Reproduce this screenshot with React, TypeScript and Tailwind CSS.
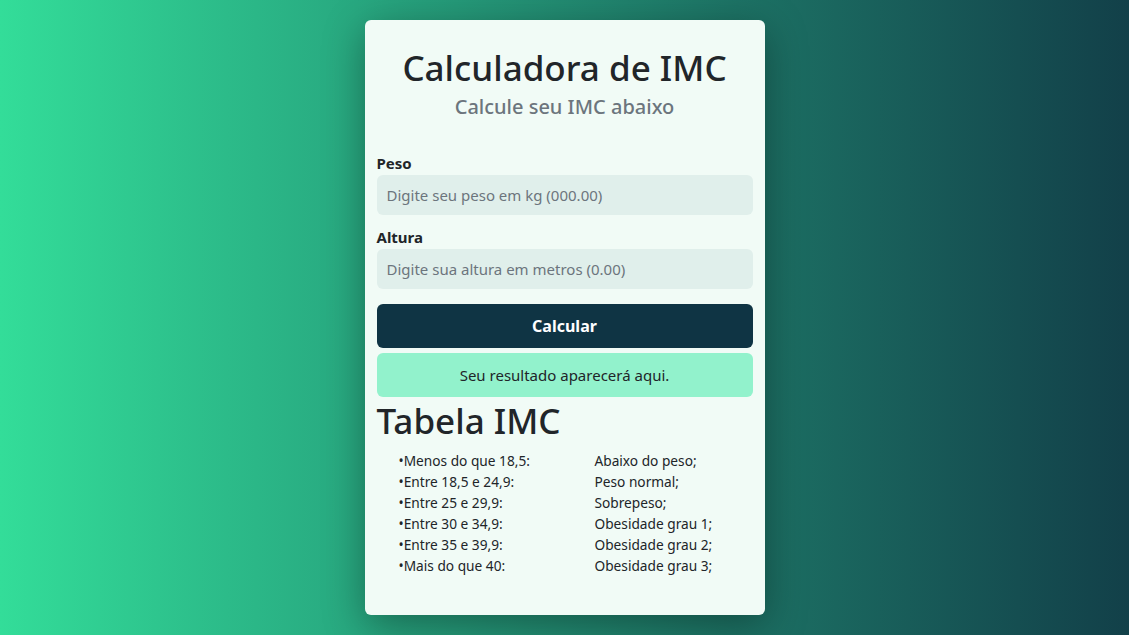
const rows = [
  ['Menos do que 18,5:', 'Abaixo do peso;'],
  ['Entre 18,5 e 24,9:', 'Peso normal;'],
  ['Entre 25 e 29,9:', 'Sobrepeso;'],
  ['Entre 30 e 34,9:', 'Obesidade grau 1;'],
  ['Entre 35 e 39,9:', 'Obesidade grau 2;'],
  ['Mais do que 40:', 'Obesidade grau 3;'],
];

export default function App() {
  return (
    <div className="min-h-[635px] bg-gradient-to-r from-[#33dd99] to-[#124049] pt-5 pb-5 font-['Noto_Sans',sans-serif] text-[#212529]">
      <div className="mx-auto w-[400px] h-[595px] rounded-md bg-[#f1fbf6] px-3 pt-6 shadow-[0_10px_40px_rgba(0,0,0,0.35)]">
        <h1 className="text-center text-[35px] leading-[48px] font-medium">Calculadora de IMC</h1>
        <p className="text-center text-[20px] leading-[30px] font-medium text-[#6c757d]">Calcule seu IMC abaixo</p>

        <form className="mt-[29px]" onSubmit={(e) => e.preventDefault()}>
          <label className="block text-[15px] leading-6 font-bold">Peso</label>
          <input
            className="block w-full h-10 rounded-md bg-[#e0efeb] px-[10px] text-[15px] outline-none placeholder:text-[#6c757d]"
            placeholder="Digite seu peso em kg (000.00)"
          />
          <label className="block mt-[10px] text-[15px] leading-6 font-bold">Altura</label>
          <input
            className="block w-full h-10 rounded-md bg-[#e0efeb] px-[10px] text-[15px] outline-none placeholder:text-[#6c757d]"
            placeholder="Digite sua altura em metros (0.00)"
          />
          <button className="mt-[15px] w-full h-11 rounded-md bg-[#0f3444] text-white text-[16px] font-bold">
            Calcular
          </button>
        </form>

        <div className="mt-[5px] h-11 rounded-md bg-[#92f2cc] flex items-center justify-center text-[15px]">
          Seu resultado aparecerá aqui.
        </div>

        <h1 className="text-[35px] leading-[48px] font-medium">Tabela IMC</h1>

        <div className="mt-[5px] pl-[22px] grid grid-cols-[196px_1fr] text-[13.7px] leading-[21px]">
          {rows.map(([a, b]) => (
            <div key={a} className="contents">
              <span>•{a}</span>
              <span>{b}</span>
            </div>
          ))}
        </div>
      </div>
    </div>
  );
}
